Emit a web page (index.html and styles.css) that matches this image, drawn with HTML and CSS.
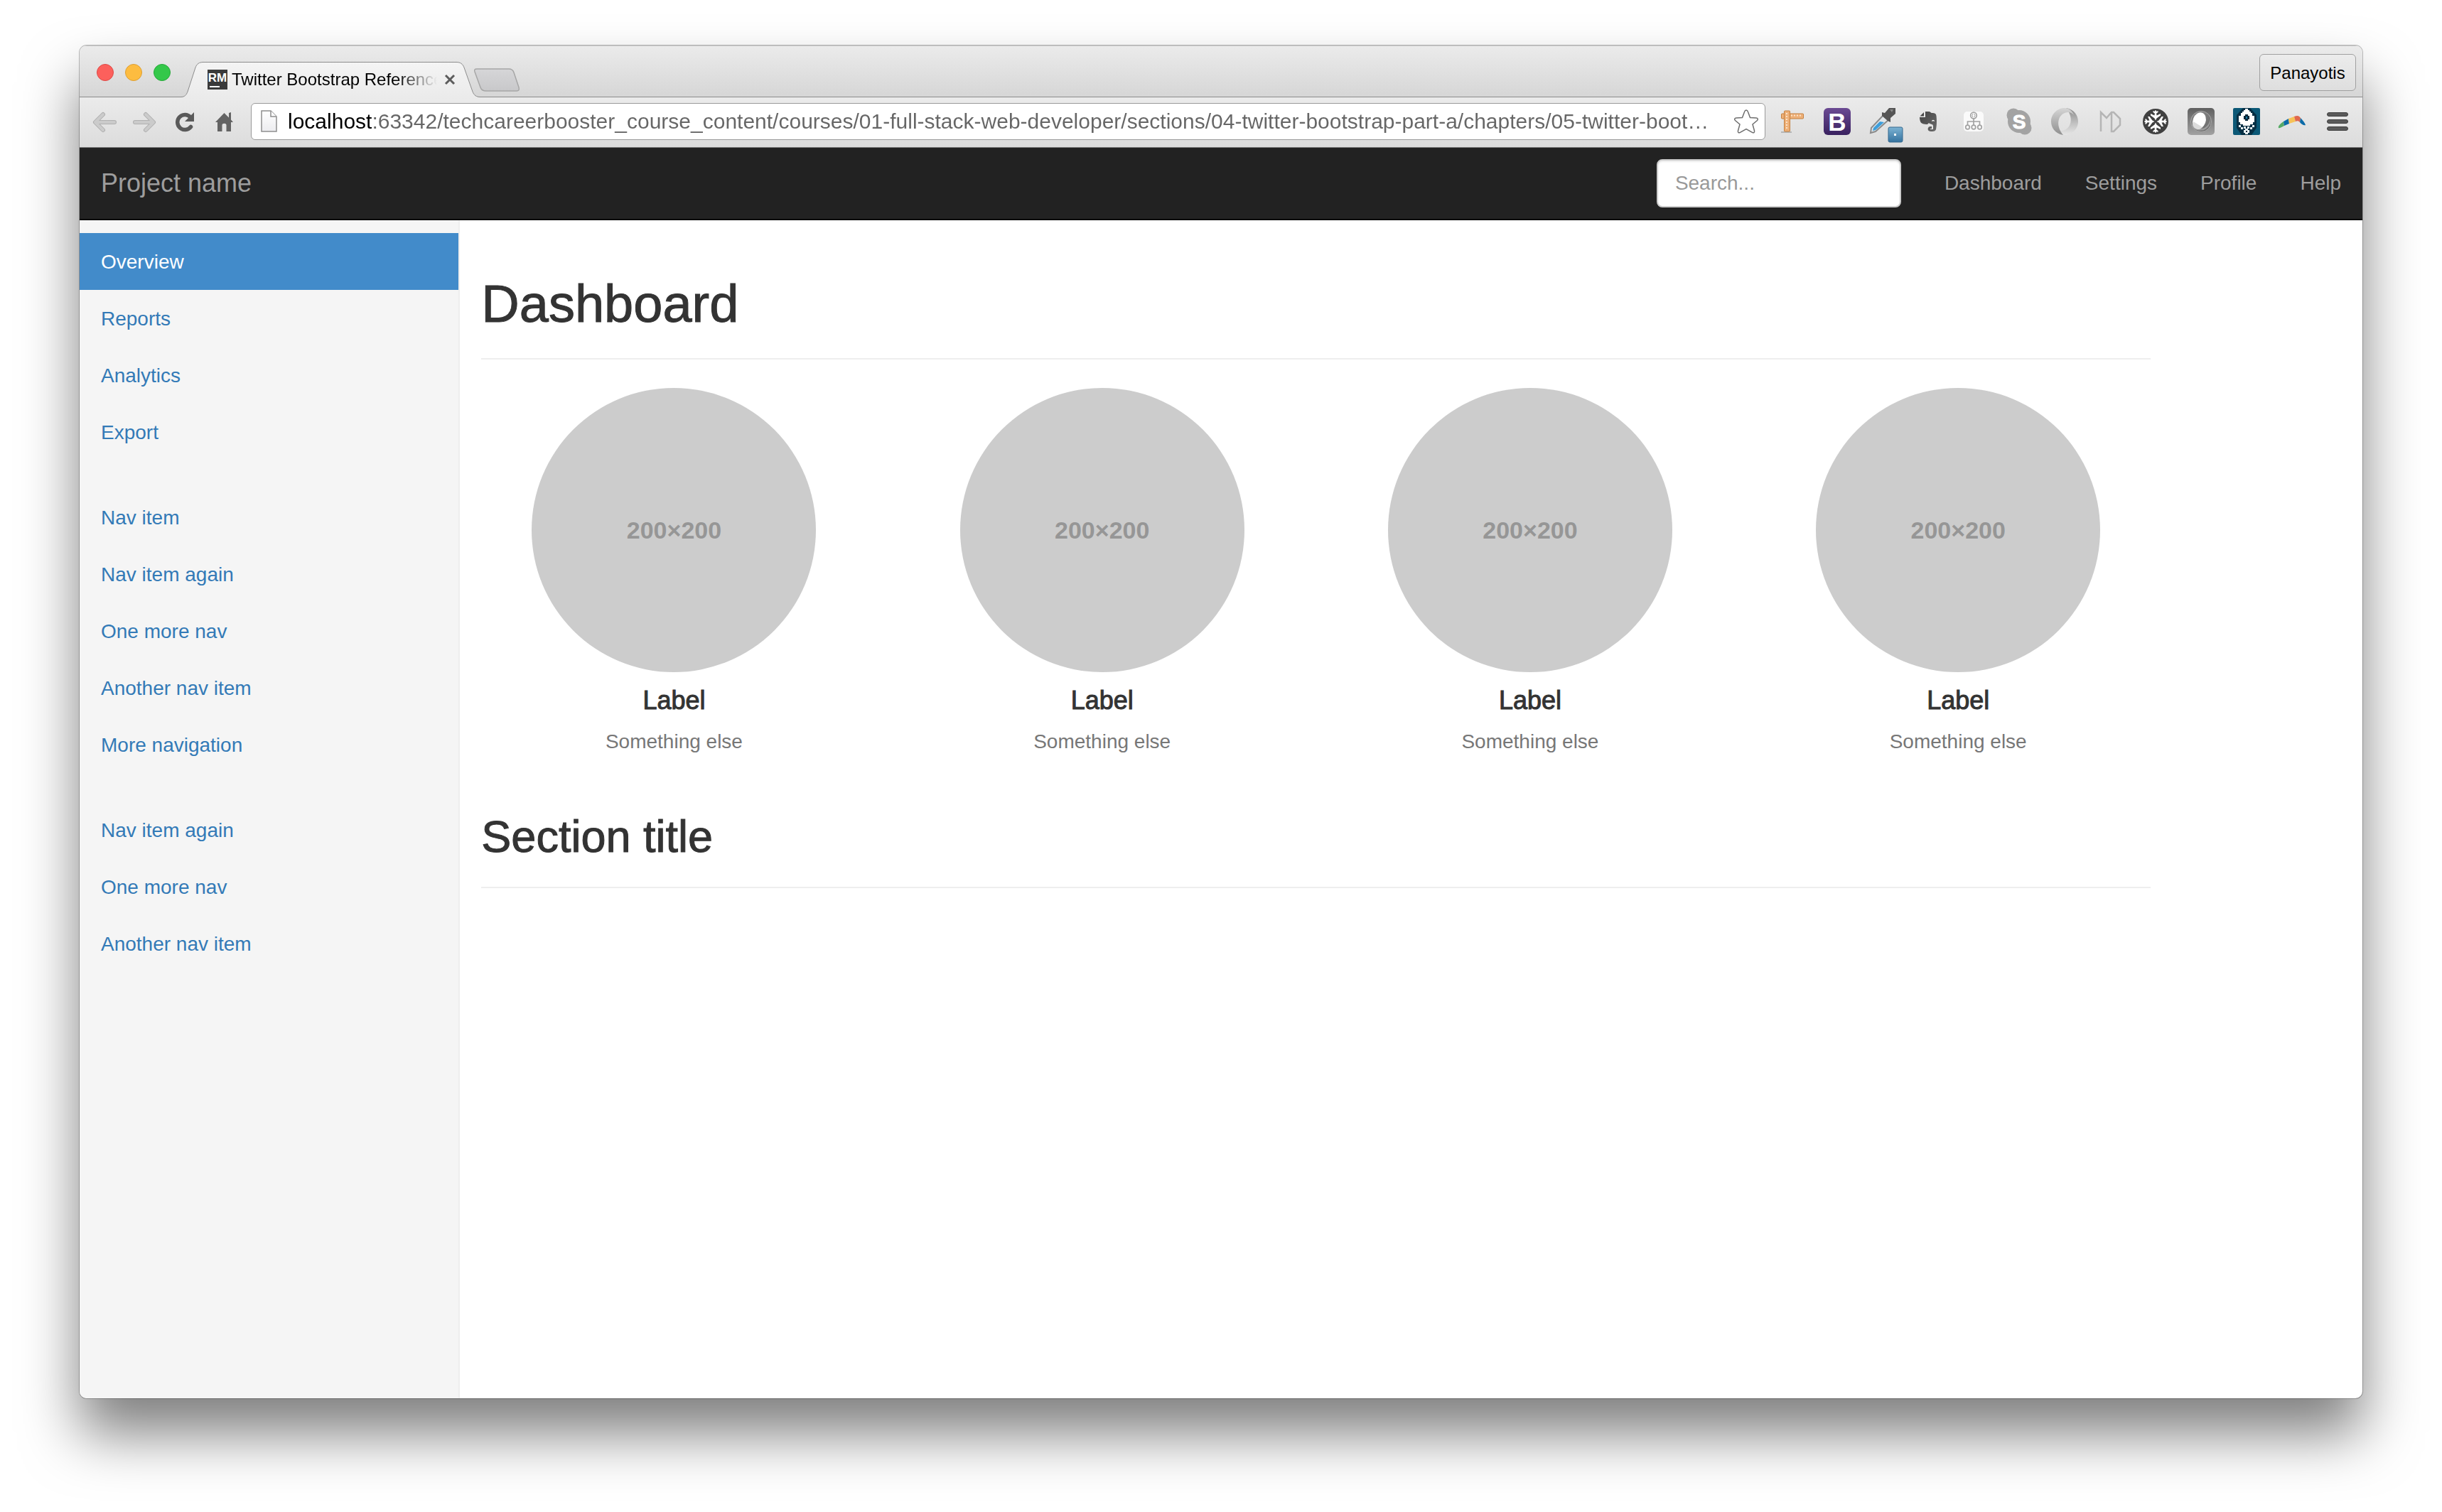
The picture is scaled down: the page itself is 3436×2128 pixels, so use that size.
FILE: index.html
```html
<!DOCTYPE html>
<html lang="en">
<head>
<meta charset="utf-8">
<title>Twitter Bootstrap Reference</title>
<link rel="stylesheet" href="styles.css">
</head>
<body>
<div class="window">
  <header class="tabstrip">
    <div class="lights">
      <button class="light light-close" aria-label="Close window"></button>
      <button class="light light-min" aria-label="Minimize window"></button>
      <button class="light light-max" aria-label="Zoom window"></button>
    </div>
    <div class="tab">
      <svg class="tab-shape" width="422" height="50" viewBox="0 0 422 50" aria-hidden="true">
        <defs><linearGradient id="tabFill" x1="0" y1="0" x2="0" y2="1"><stop offset="0" stop-color="#f4f4f4"/><stop offset="1" stop-color="#ebebeb"/></linearGradient></defs>
        <path d="M0 49.5C6 49.5 8 47 10 42L21 8C23 3 26 .5 32 .5H388C394 .5 397 3 399 8L411 42C413 47 416 49.5 422 49.5V50H0Z" fill="url(#tabFill)"/>
        <path d="M0 49.5C6 49.5 8 47 10 42L21 8C23 3 26 .5 32 .5H388C394 .5 397 3 399 8L411 42C413 47 416 49.5 422 49.5" fill="none" stroke="#8c8c8c"/>
      </svg>
      <svg class="favicon" width="28" height="28" viewBox="0 0 28 28" aria-hidden="true">
        <rect width="28" height="28" fill="#3a3a3a"/>
        <text x="14" y="17" text-anchor="middle" class="logo-text" font-size="17" fill="#fff">RM</text>
        <rect x="3" y="23" width="14" height="2" fill="#fff"/>
      </svg>
      <span class="tab-title">Twitter Bootstrap Reference</span>
      <button class="tab-close" aria-label="Close tab">
        <svg width="16" height="16" viewBox="0 0 16 16"><path d="M2 2L14 14M14 2L2 14" stroke="#5c5c5c" stroke-width="3"/></svg>
      </button>
    </div>
    <button class="new-tab" aria-label="New tab">
      <svg width="66" height="34" viewBox="0 0 66 34"><defs><linearGradient id="newFill" x1="0" y1="0" x2="0" y2="1"><stop offset="0" stop-color="#d6d6d8"/><stop offset="1" stop-color="#c8c8ca"/></linearGradient></defs><path d="M5 1H50C54 1 56 3 57 6L64 27C65 30 64 32 61 32H18C13 32 11 30 10 27L2 5C1 2 2 1 5 1Z" fill="url(#newFill)" stroke="#a6a6a6" stroke-width="1.500"/></svg>
    </button>
    <button class="user">Panayotis</button>
  </header>

  <div class="toolbar">
    <button class="tool" aria-label="Back"><svg width="48" height="48" viewBox="0 0 48 48" fill="none" stroke-linecap="round" stroke-linejoin="round"><path d="M21 14L10 25L21 36M11 25H37" stroke="#b0b0b0" stroke-width="6"/><path d="M21 14L10 25L21 36M11 25H37" stroke="#cbcbcb" stroke-width="4"/></svg></button>
    <button class="tool" aria-label="Forward"><svg width="48" height="48" viewBox="0 0 48 48" fill="none" stroke-linecap="round" stroke-linejoin="round"><path d="M25 14L36 25L25 36M35 25H10" stroke="#b0b0b0" stroke-width="6"/><path d="M25 14L36 25L25 36M35 25H10" stroke="#cbcbcb" stroke-width="4"/></svg></button>
    <button class="tool" aria-label="Reload"><svg width="48" height="48" viewBox="0 0 48 48"><path d="M32 18A10.500 10.500 0 1 0 32.500 31.500" fill="none" stroke="#5a5a5a" stroke-width="5.500" stroke-linecap="round"/><path d="M37 11V24H24Z" fill="#5a5a5a"/></svg></button>
    <button class="tool" aria-label="Home"><svg width="48" height="48" viewBox="0 0 48 48"><path d="M23.500 12L30 18.500V12L33 11V21.500L36 25H33V38H26.500V29C26.500 26 20.500 26 20.500 29V38H14V25H11Z" fill="#636363"/></svg></button>
    <div class="omnibox">
      <svg class="page-icon" width="24" height="32" viewBox="0 0 24 32" aria-hidden="true"><defs><linearGradient id="pg" x1="0" y1="0" x2="0" y2="1"><stop offset="0" stop-color="#fff"/><stop offset="1" stop-color="#ececef"/></linearGradient></defs><path d="M1 1H14L22 9V30H1Z" fill="url(#pg)" stroke="#8e8e8e" stroke-width="1.500"/><path d="M14 1V9H22" fill="#fff" stroke="#8e8e8e" stroke-width="1.500"/></svg>
      <input class="url" type="text" aria-label="Address" value="localhost:63342/techcareerbooster_course_content/courses/01-full-stack-web-developer/sections/04-twitter-bootstrap-part-a/chapters/05-twitter-boot…">
      <button class="star" aria-label="Bookmark"><svg width="36" height="36" viewBox="0 0 36 36"><path d="M18 2C19 2 20 3 20.500 4.500L23.500 12.500L32 13C34.500 13.200 35 15 33.500 16.500L27 22L29.500 31C30 33.500 28.500 34.500 26.500 33.300L18 28.500L9.500 33.300C7.500 34.500 6 33.500 6.500 31L9 22L2.500 16.500C1 15 1.500 13.200 4 13L12.500 12.500L15.500 4.500C16 3 17 2 18 2Z" fill="#fff" stroke="#6e6e6e" stroke-width="1.500"/></svg></button>
    </div>
    <div class="extensions">
      <button class="ext" aria-label="Page ruler"><svg width="48" height="48" viewBox="0 0 48 48"><path d="M9 39H24" stroke="#b5b5b5" stroke-width="2"/><rect x="9.500" y="13" width="31" height="7" rx="1" fill="#eeb078" stroke="#c4803f"/><rect x="13.500" y="9" width="8" height="29" rx="1" fill="#eeb078" stroke="#c4803f"/><path d="M23 15.500H39" stroke="#fbe3c8" stroke-width="2" stroke-dasharray="2 2"/><path d="M17 12V36" stroke="#fbe3c8" stroke-width="2" stroke-dasharray="2 2"/></svg></button>
      <button class="ext" aria-label="Bootstrap"><svg width="48" height="48" viewBox="0 0 48 48"><defs><linearGradient id="bs" x1="0" y1="0" x2="0" y2="1"><stop offset="0" stop-color="#6b4a93"/><stop offset="1" stop-color="#39215f"/></linearGradient></defs><rect x="5" y="5" width="38" height="38" rx="6" fill="url(#bs)"/><text x="24" y="37" text-anchor="middle" class="logo-text" font-size="35" fill="#fff">B</text></svg></button>
      <button class="ext" aria-label="Color picker"><svg width="48" height="48" viewBox="0 0 48 48"><path d="M7 40L8 33L26 14L33 21L14 38Z" fill="#e3e7ea" stroke="#8b8b8b" stroke-width="2"/><path d="M10 37L11 33L20 24L26 25L14 36Z" fill="#3c9edb"/><path d="M23 11L27 12L33 5H42V13L35 19V25L31 23L23 16Z" fill="#555"/><path d="M34 7L39 7L37 11Z" fill="#888"/><defs><linearGradient id="bd" x1="0" y1="0" x2="0" y2="1"><stop offset="0" stop-color="#7db3d3"/><stop offset="1" stop-color="#34729f"/></linearGradient></defs><rect x="32" y="32" width="20" height="21" rx="2" fill="url(#bd)" stroke="#35698e"/><rect x="40" y="41" width="3" height="3" fill="#fff"/></svg></button>
      <button class="ext" aria-label="Evernote"><svg width="48" height="48" viewBox="0 0 48 48"><defs><linearGradient id="ev" x1="0" y1="0" x2="1" y2="1"><stop offset="0" stop-color="#444"/><stop offset="1" stop-color="#6a6a6a"/></linearGradient></defs><path d="M20 10H25C27 10 28 12 29 12C34 12 35 13 35.500 16C36 20 36.500 28 35 35C34 38 31 38 28 38C24 38 23 35 24 33C25 31 26 31 29 31V34H27V35H31V30C31 27 26 28 25 26L23 28C18 28 14 27 13 24C12 21 12 19 12 18H20Z" fill="url(#ev)"/><path d="M12.500 16.500L18 11V16.500Z" fill="#444"/><path d="M29 24C29 21 33 21 33 24C32 23 30 23 29 24Z" fill="#fff"/></svg></button>
      <button class="ext" aria-label="Site map"><svg width="48" height="48" viewBox="0 0 48 48"><rect x="10" y="10" width="28" height="28" rx="5" fill="#fafafa"/><g fill="none" stroke="#a3a3a3" stroke-width="1.700"><circle cx="24" cy="15.500" r="4.300"/><path d="M24 20V29M15.500 29V24H32.500V29"/><circle cx="15.500" cy="32" r="2.800"/><circle cx="24" cy="32" r="2.800"/><circle cx="32.500" cy="32" r="2.800"/><path d="M23 13L22 15.500L23 18M25 13L26 15.500L25 18" stroke-width="1"/></g></svg></button>
      <button class="ext" aria-label="Skype"><svg width="48" height="48" viewBox="0 0 48 48"><g fill="#a3a3a3"><circle cx="16" cy="15" r="9.500"/><circle cx="32" cy="33" r="9.500"/><circle cx="24" cy="24" r="16"/></g><text x="24" y="34" text-anchor="middle" class="logo-text" font-size="28" fill="#fff" stroke="#fff">S</text></svg></button>
      <button class="ext" aria-label="Sync"><svg width="48" height="48" viewBox="0 0 48 48"><defs><linearGradient id="r1" x1="0" y1="0" x2="0" y2="1"><stop offset="0" stop-color="#8a8a8a"/><stop offset=".6" stop-color="#c4c4c4"/><stop offset="1" stop-color="#e6e6e6"/></linearGradient><linearGradient id="r2" x1="0" y1="1" x2="0" y2="0"><stop offset="0" stop-color="#8f8f8f"/><stop offset=".6" stop-color="#b8b8b8"/><stop offset="1" stop-color="#d6d6d6"/></linearGradient></defs><path d="M26 5C38 7 43 16 43 24C43 35 34 43 24 43C17 43 12 39 11 33C15 38 21 38 26 35C34 30 36 17 26 5Z" fill="url(#r1)"/><path d="M22 43C10 41 5 32 5 24C5 13 14 5 24 5C30 5 35 9 37 15C33 10 27 10 22 13C14 18 12 31 22 43Z" fill="url(#r2)"/></svg></button>
      <button class="ext" aria-label="Markdown"><svg width="48" height="48" viewBox="0 0 48 48"><path d="M11 38V11L19 19L26 11H29L38 20V29L29 38H26V11" fill="none" stroke="#b5b5b5" stroke-width="2.500"/></svg></button>
      <button class="ext" aria-label="Flights"><svg width="48" height="48" viewBox="0 0 48 48"><circle cx="24" cy="24" r="18" fill="#404040"/><defs><path id="plane" d="M23 8.500H25L25.300 10L27.500 9V11L25.200 12.500L25.500 15.500L31 13V15.500L25.500 19.500L24 22.500L22.500 19.500L17 15.500V13L22.500 15.500L22.800 12.500L20.500 11V9L22.700 10Z" fill="#fff"/></defs><use href="#plane"/><use href="#plane" transform="rotate(90 24 24)"/><use href="#plane" transform="rotate(180 24 24)"/><use href="#plane" transform="rotate(270 24 24)"/></svg></button>
      <button class="ext" aria-label="Moon"><svg width="48" height="48" viewBox="0 0 48 48"><defs><linearGradient id="mb" x1="0" y1="0" x2="0" y2="1"><stop offset="0" stop-color="#606060"/><stop offset="1" stop-color="#a2a2a2"/></linearGradient><linearGradient id="mc" x1="0" y1="0" x2="1" y2="1"><stop offset="0" stop-color="#888"/><stop offset="1" stop-color="#6a6a6a"/></linearGradient></defs><rect x="5" y="5" width="38" height="38" rx="5" fill="url(#mb)"/><circle cx="24" cy="24" r="14.500" fill="url(#mc)" stroke="#a8a8a8"/><path d="M10 28C13 36 21 38 28 36C35 33 38 26 37 20C36 28 30 35 22 34Z" fill="#9c9c9c"/><ellipse cx="21.500" cy="23" rx="9" ry="12" fill="#fff" transform="rotate(20 21.500 23)"/><path d="M13 24L26 32C22 36 14 36 12 28Z" fill="#dcdcdc"/></svg></button>
      <button class="ext" aria-label="Rocket"><svg width="48" height="48" viewBox="0 0 48 48"><rect x="5" y="5" width="38" height="38" rx="2" fill="#0b5876"/><path d="M19 5H29L38 15V33L31 43H17L10 33V15Z" fill="#052f44"/><path d="M22 6H26V8H28V10H30V12H32V16H35V25H33V28H29V30H19V28H15V25H13V16H16V12H18V10H20V8H22Z" fill="#fff"/><path d="M22 14H26V16H28V21H26V23H22V21H20V16H22Z" fill="#05283a"/><path d="M23 17H25V20H23Z" fill="#1977a0"/><path d="M13 29H16V32H13ZM32 29H35V32H32ZM16 32H19V35H16ZM29 32H32V35H29ZM20 31H23V34H20ZM25 31H28V34H25ZM22 34H26V36H28V40H26V42H22V40H20V36H22Z" fill="#eef6f8"/><path d="M23 37H25V39H23Z" fill="#05283a"/></svg></button>
      <button class="ext" aria-label="Boomerang"><svg width="48" height="48" viewBox="0 0 48 48"><path d="M5 33C4 31 7 27 12 24L13 30C9 32 6 34 5 33Z" fill="#57ab66"/><path d="M12 24L19 20L20 27L13 30Z" fill="#0c6ba8"/><path d="M19 20L27 17L29 24L20 27Z" fill="#f6c258"/><path d="M27 17C32 15 34 16 36 19L35 25C33 23 31 23 29 24Z" fill="#e0684e"/><path d="M36 19C39 22 42 26 43 29C41 30 37 28 35 25Z" fill="#0c6ba8"/></svg></button>
      <button class="ext" aria-label="Menu"><svg width="48" height="48" viewBox="0 0 48 48"><g fill="#5a5a5a" stroke="#3e3e3e"><rect x="9.500" y="11.500" width="29" height="5" rx="2.500"/><rect x="9.500" y="21.500" width="29" height="5" rx="2.500"/><rect x="9.500" y="31.500" width="29" height="5" rx="2.500"/></g></svg></button>
    </div>
  </div>

  <nav class="navbar">
    <a class="brand" href="#">Project name</a>
    <form class="search"><input class="search-input" type="text" aria-label="Search" placeholder="Search..."></form>
    <ul class="navbar-links">
      <li><a href="#">Dashboard</a></li>
      <li><a href="#">Settings</a></li>
      <li><a href="#">Profile</a></li>
      <li><a href="#">Help</a></li>
    </ul>
  </nav>

  <div class="page">
    <aside class="sidebar">
      <ul class="side-nav">
        <li><a class="active" href="#">Overview</a></li>
        <li><a href="#">Reports</a></li>
        <li><a href="#">Analytics</a></li>
        <li><a href="#">Export</a></li>
      </ul>
      <ul class="side-nav">
        <li><a href="#">Nav item</a></li>
        <li><a href="#">Nav item again</a></li>
        <li><a href="#">One more nav</a></li>
        <li><a href="#">Another nav item</a></li>
        <li><a href="#">More navigation</a></li>
      </ul>
      <ul class="side-nav">
        <li><a href="#">Nav item again</a></li>
        <li><a href="#">One more nav</a></li>
        <li><a href="#">Another nav item</a></li>
      </ul>
    </aside>
    <main class="main">
      <div class="page-header"><h1>Dashboard</h1></div>
      <div class="placeholders">
        <div class="placeholder"><div class="circle">200×200</div><h4>Label</h4><span class="muted">Something else</span></div>
        <div class="placeholder"><div class="circle">200×200</div><h4>Label</h4><span class="muted">Something else</span></div>
        <div class="placeholder"><div class="circle">200×200</div><h4>Label</h4><span class="muted">Something else</span></div>
        <div class="placeholder"><div class="circle">200×200</div><h4>Label</h4><span class="muted">Something else</span></div>
      </div>
      <div class="page-header"><h2>Section title</h2></div>
    </main>
  </div>
</div>
</body>
</html>
```
FILE: styles.css
```css
* { box-sizing: border-box; }

body {
  margin: 0;
  min-height: 100vh;
  padding: 64px 112px 160px;
  display: flex;
  flex-direction: column;
  background: #fff;
  color: #333;
  font-family: "Liberation Sans", Arial, sans-serif;
  font-size: 28px;
  line-height: 40px;
}

button {
  margin: 0;
  padding: 0;
  border: 0;
  background: none;
  font: inherit;
  color: inherit;
}

svg { display: block; }
a { text-decoration: none; }
ul { list-style: none; margin: 0; padding: 0; }

.logo-text { font-family: "Liberation Sans", Arial, sans-serif; font-weight: 700; }

.window {
  flex: 1;
  display: flex;
  flex-direction: column;
  border-radius: 10px;
  overflow: hidden;
  background: #fff;
  box-shadow: 0 0 0 1px rgba(0, 0, 0, .25), 0 50px 80px rgba(0, 0, 0, .5);
}

/* Tab strip */
.tabstrip {
  display: flex;
  align-items: flex-end;
  height: 73px;
  padding: 0 9px 0 24px;
  border-bottom: 1px solid #8c8c8c;
  border-top: 1px solid #c4c4c4;
  background: linear-gradient(#ebebeb, #d6d6d6);
}

.lights {
  align-self: center;
  display: flex;
  gap: 16px;
  margin-right: 14px;
}

.light {
  width: 24px;
  height: 24px;
  margin-top: 3px;
  border-radius: 50%;
  border: 1px solid;
}

.light-close { background: #fc605c; border-color: #dd4a46; }
.light-min { background: #fdbc40; border-color: #dd9f33; }
.light-max { background: #34c84a; border-color: #27a93a; }

.tab {
  position: relative;
  display: flex;
  align-items: center;
  width: 422px;
  height: 50px;
  margin-bottom: -1px;
  padding: 0 35px 0 38px;
}

.tab-shape { position: absolute; left: 0; top: 0; }
.favicon { position: relative; flex: none; }

.tab-title {
  position: relative;
  flex: 1;
  margin: 0 10px 0 6px;
  overflow: hidden;
  white-space: nowrap;
  font-size: 24px;
  line-height: 28px;
  color: #000;
  -webkit-mask-image: linear-gradient(to right, #000 80%, transparent);
  mask-image: linear-gradient(to right, #000 80%, transparent);
}

.tab-close { position: relative; }
.new-tab { margin: 0 auto 6px -10px; }

.user {
  width: 136px;
  height: 52px;
  margin-bottom: 8px;
  padding-top: 2px;
  border: 1px solid #a0a0a0;
  border-radius: 6px;
  background: linear-gradient(#ececec, #dedede);
  font-size: 24px;
  line-height: 28px;
  color: #000;
}

/* Toolbar */
.toolbar {
  display: flex;
  align-items: center;
  padding: 8px 3px 10px 8px;
  border-bottom: 1px solid #7c7c7c;
  background: linear-gradient(#ebebeb, #dcdcdc);
}

.tool { width: 56px; display: flex; justify-content: center; }
.ext { width: 64px; display: flex; justify-content: center; }
.ext svg { overflow: visible; }
.extensions { display: flex; }

.omnibox {
  flex: 1;
  display: flex;
  align-items: center;
  min-width: 0;
  height: 52px;
  margin: 0 5px 0 9px;
  padding: 0 8px 0 13px;
  border: 1px solid #9a9a9a;
  border-radius: 6px;
  background: #fff;
}

.url {
  flex: 1;
  min-width: 0;
  height: 40px;
  margin: 0 14px;
  padding: 0;
  border: 0;
  font: inherit;
  font-size: 30px;
  color: #666;
  -webkit-text-fill-color: transparent;
  background: linear-gradient(to right, #000 119px, #666 119px);
  -webkit-background-clip: text;
  background-clip: text;
}

/* Site navigation bar */
.navbar {
  display: flex;
  align-items: center;
  height: 102px;
  padding: 0 30px;
  border-bottom: 2px solid #080808;
  background: #222;
}

.navbar a { color: #9d9d9d; }
.brand { font-size: 36px; margin-right: auto; }
.search { margin-right: 61px; }

.search-input {
  display: block;
  width: 344px;
  height: 68px;
  padding: 0 24px;
  border: 2px solid #ccc;
  border-radius: 8px;
  background: #fff;
  box-shadow: inset 0 2px 2px rgba(0, 0, 0, .08);
  font: inherit;
  color: #555;
}

.search-input::placeholder { color: #999; opacity: 1; }
.navbar-links { display: flex; gap: 61px; }

/* Page */
.page { flex: 1; display: flex; }

.sidebar {
  width: 16.6667%;
  padding-top: 18px;
  border-right: 2px solid #eee;
  background: #f5f5f5;
}

.side-nav { margin-bottom: 40px; }

.side-nav a {
  display: block;
  padding: 21px 30px 19px;
  color: #337ab7;
}

.side-nav .active { background: #428bca; color: #fff; }

.main { width: 75%; padding: 78px 30px 0; }

.page-header {
  padding-bottom: 18px;
  border-bottom: 2px solid #eee;
}

h1, h2, h4 { margin: 0; font-weight: 400; -webkit-text-stroke: 1px #333; }
h1 { margin-bottom: 18px; font-size: 74px; line-height: 80px; }
h2 { margin-bottom: 20px; font-size: 63px; line-height: 66px; }
h4 { margin: 20px 0 18px; font-size: 36px; line-height: 40px; }

.placeholders {
  display: grid;
  grid-template-columns: repeat(4, 1fr);
  margin: 40px -30px 80px;
  text-align: center;
}

.circle {
  display: flex;
  align-items: center;
  justify-content: center;
  width: 400px;
  height: 400px;
  margin: 0 auto;
  border-radius: 50%;
  background: #ccc;
  color: #969696;
  font-size: 34px;
  font-weight: 700;
}

.placeholder { display: flex; flex-direction: column; }
.muted { color: #777; }
```
